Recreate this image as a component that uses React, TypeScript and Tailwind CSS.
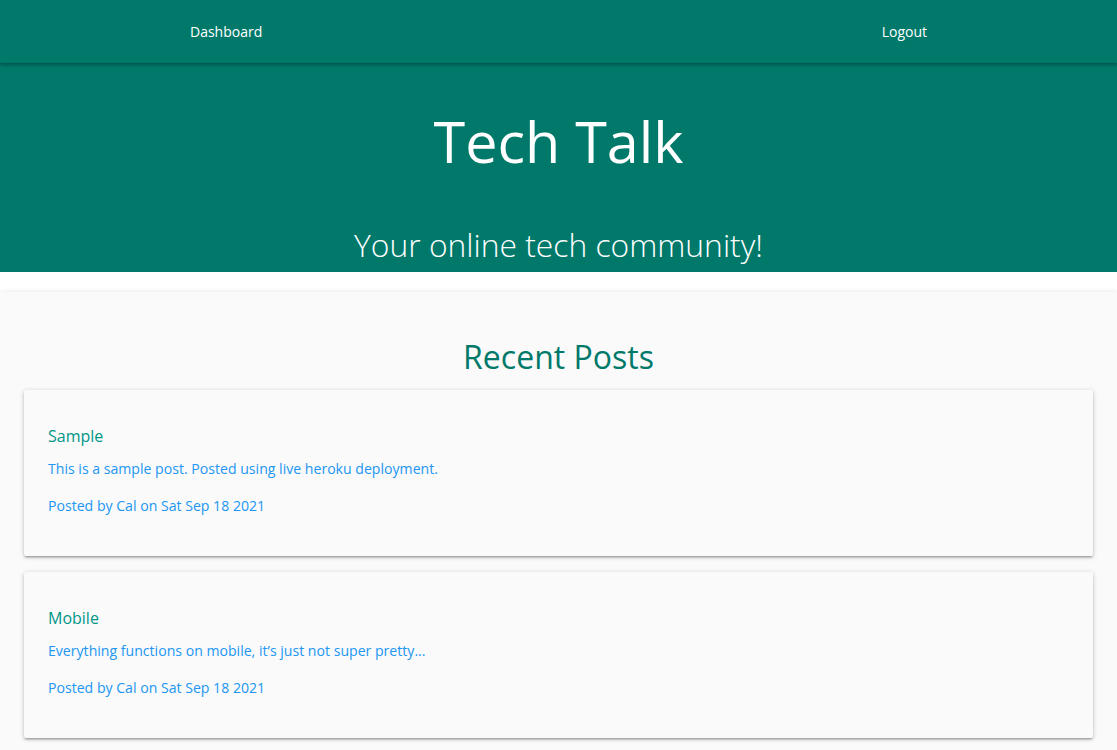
import React from "react";

const posts = [
  { title: "Sample", body: "This is a sample post. Posted using live heroku deployment.", meta: "Posted by Cal on Sat Sep 18 2021" },
  { title: "Mobile", body: "Everything functions on mobile, it’s just not super pretty...", meta: "Posted by Cal on Sat Sep 18 2021" },
];

export default function App() {
  return (
    <div className="min-h-[750px] bg-white" style={{ fontFamily: '"Open Sans", "Noto Sans", sans-serif' }}>
      <nav className="relative z-10 flex h-[63px] items-center justify-between bg-[#00796b] px-[190px] text-[14px] text-white shadow-[0_2px_3px_rgba(0,0,0,0.3)]">
        <a>Dashboard</a>
        <a>Logout</a>
      </nav>
      <header className="flex h-[209px] flex-col items-center bg-[#00796b] text-white">
        <h1 className="mt-[38px] text-[57.5px] leading-[80px] font-normal">Tech Talk</h1>
        <p className="mt-[42px] text-[31.8px] leading-[44px] font-light">Your online tech community!</p>
      </header>
      <main className="mt-[20px] min-h-[458px] bg-[#fafafa] px-[24px] pb-4 shadow-[0_-1px_4px_rgba(0,0,0,0.08)]">
        <h2 className="pt-[45px] pb-[13px] text-center text-[32px] leading-[40px] text-[#00796b]">Recent Posts</h2>
        <div className="flex flex-col gap-[16px]">
          {posts.map((p) => (
            <div key={p.title} className="h-[166px] rounded-[2px] bg-[#fafafa] px-[24px] pt-[34px] shadow-[0_2px_2px_0_rgba(0,0,0,0.14),0_3px_1px_-2px_rgba(0,0,0,0.12),0_1px_5px_0_rgba(0,0,0,0.2)]">
              <h3 className="text-[16px] leading-[24px] text-[#009688]">{p.title}</h3>
              <p className="mt-[10px] text-[14.1px] leading-[22px] text-[#2196f3]">{p.body}</p>
              <p className="mt-[15px] text-[14.1px] leading-[22px] text-[#2196f3]">{p.meta}</p>
            </div>
          ))}
        </div>
      </main>
    </div>
  );
}
